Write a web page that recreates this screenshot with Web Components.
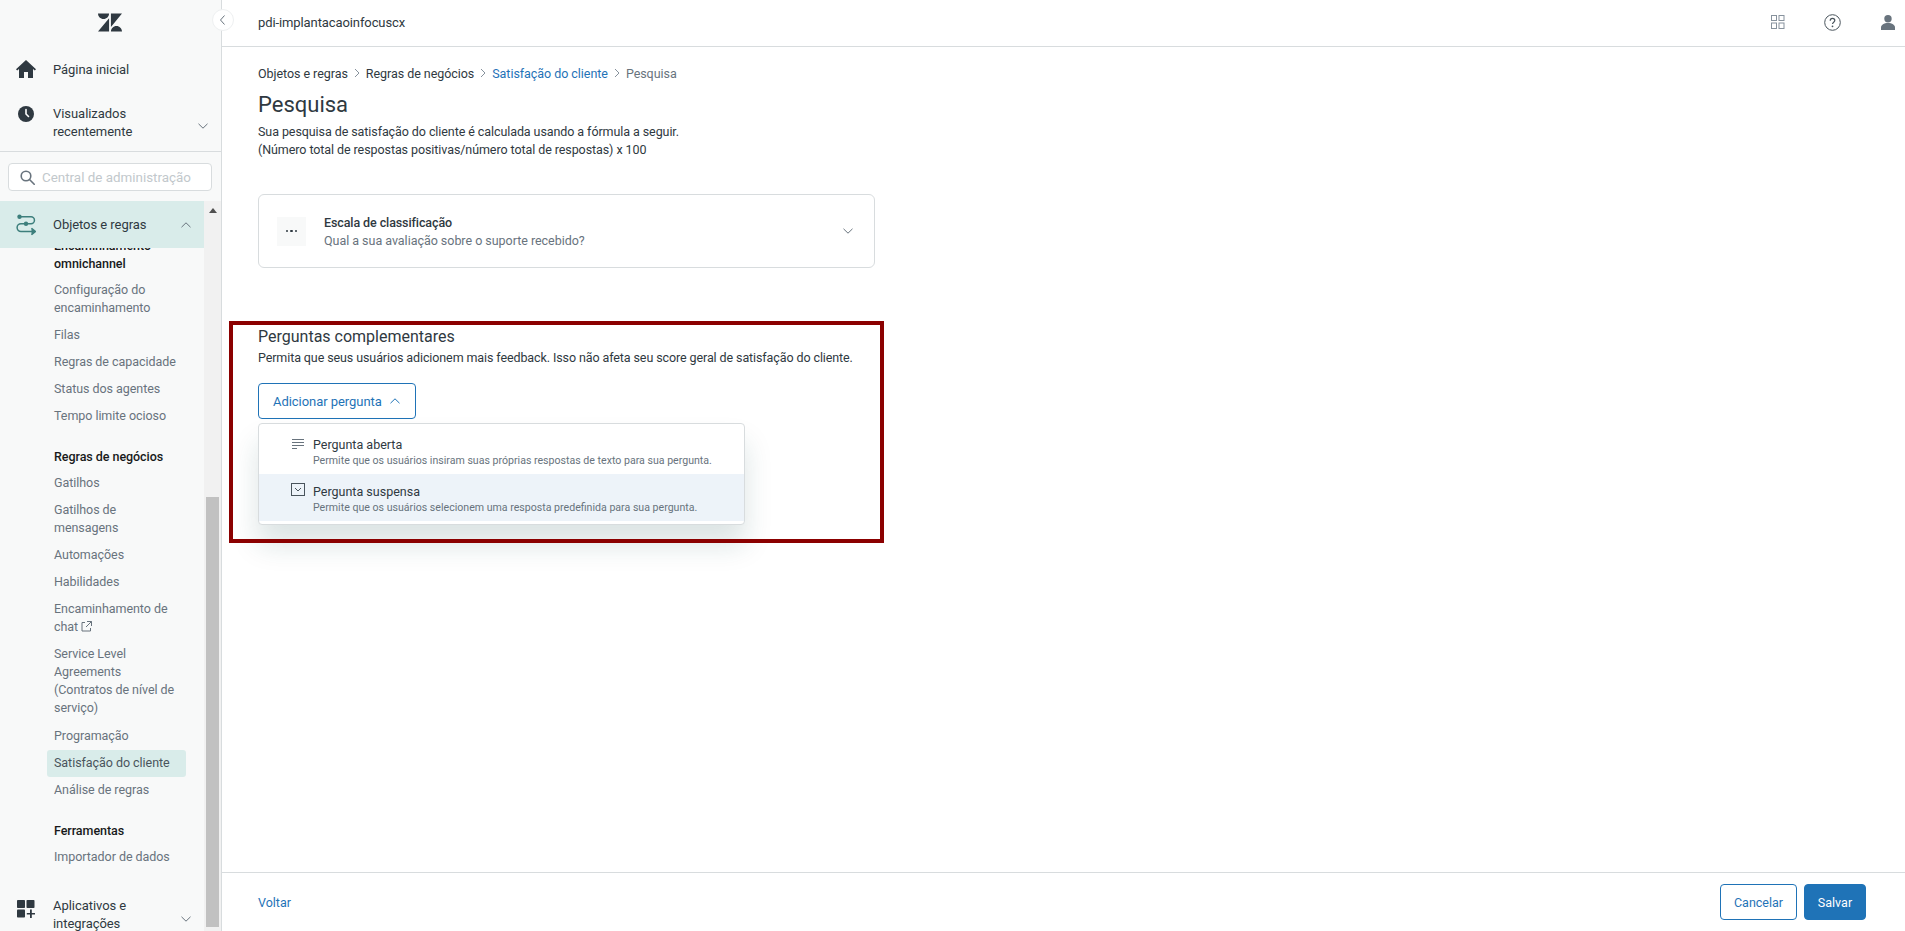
<!DOCTYPE html>
<html lang="pt-BR"><head><meta charset="utf-8"><title>Pesquisa</title>
<style>
html,body{margin:0;height:100%;overflow:hidden;background:#fff}
body{font-family:Roboto,"Open Sans",sans-serif;font-size:13px;color:#2f3941}
</style></head><body>
<zd-app>
  <zd-sidebar slot="side">
    <zd-nav slot="top" label="Página inicial" icon="home" style="height:47px;margin-top:45px"></zd-nav>
    <zd-nav slot="top" label="Visualizados<br>recentemente" icon="clock" chevron="down" style="height:60px"></zd-nav>
    <zd-link heading two>Encaminhamento<br>omnichannel</zd-link>
    <zd-link two>Configuração do<br>encaminhamento</zd-link>
    <zd-link>Filas</zd-link>
    <zd-link>Regras de capacidade</zd-link>
    <zd-link>Status dos agentes</zd-link>
    <zd-link>Tempo limite ocioso</zd-link>
    <zd-link heading>Regras de negócios</zd-link>
    <zd-link>Gatilhos</zd-link>
    <zd-link two>Gatilhos de<br>mensagens</zd-link>
    <zd-link>Automações</zd-link>
    <zd-link>Habilidades</zd-link>
    <zd-link two>Encaminhamento de<br>chat <svg width="11" height="11" viewBox="0 0 11 11" fill="none" stroke="#68737d" style="vertical-align:-1px"><path d="M4 1.500H1v8.500h8.500V7M6 .5h4.500V5M10.500.5 5 6"/></svg></zd-link>
    <zd-link two style="padding-bottom:5.500px">Service Level<br>Agreements<br>(Contratos de nível de<br>serviço)</zd-link>
    <zd-link>Programação</zd-link>
    <zd-link active>Satisfação do cliente</zd-link>
    <zd-link>Análise de regras</zd-link>
    <zd-link heading>Ferramentas</zd-link>
    <zd-link>Importador de dados</zd-link>
    <zd-nav label="Aplicativos e<br>integrações" icon="apps" chevron="down" style="height:36px;margin-top:26px"></zd-nav>
  </zd-sidebar>
  <zd-topbar slot="top">pdi-implantacaoinfocuscx</zd-topbar>
  <zd-page slot="main">
    <zd-breadcrumb></zd-breadcrumb>
    <zd-intro></zd-intro>
    <zd-card></zd-card>
    <zd-followups>
      <zd-dropdown></zd-dropdown>
    </zd-followups>
  </zd-page>
  <zd-footer slot="foot"></zd-footer>
</zd-app>
<script>
const IC={
 home:'<svg width="20" height="18" viewBox="0 0 20 18" fill="#2f3941"><path d="M10 0 0 9.200l1.200 1.200L3 8.900V18h5v-6h4v6h5V8.900l1.800 1.500 1.200-1.200z"/></svg>',
 clock:'<svg width="16" height="16" viewBox="0 0 16 16"><circle cx="8" cy="8" r="8" fill="#2f3941"/><path d="M8 3.500V8l2.500 2.500" fill="none" stroke="#fff" stroke-width="1.600" stroke-linecap="round"/></svg>',
 rules:'<svg width="20" height="22" viewBox="0 0 20 22" fill="none" stroke="#3d7f7c" stroke-width="1.500"><circle cx="3.500" cy="2.800" r="2.200" fill="#3d7f7c" stroke="none"/><path d="M3.500 2.800H15a3.400 3.400 0 0 1 0 6.900H5a3.900 3.900 0 0 0 0 7.800h14"/><circle cx="10" cy="9.700" r="2.200" fill="#3d7f7c" stroke="none"/><path d="M15.500 14.200 19.300 17.500 15.500 20.800" fill="#3d7f7c"/></svg>',
 apps:'<svg width="18" height="18" viewBox="0 0 18 18" fill="#2f3941"><rect width="8" height="8" rx=".8"/><rect x="9.500" width="8" height="8" rx=".8"/><rect y="9.500" width="8" height="8" rx=".8"/><path d="M13 9.500h1.800v3.400H18v1.700h-3.200V18H13v-3.400H9.800v-1.700H13z"/></svg>'
};
const chev=(d,c='#68737d',w=12)=>`<svg width="${w}" height="${w}" viewBox="0 0 12 12" fill="none" stroke="${c}" style="display:block"><path d="${d=='up'?'M1.500 8.200 6 3.800l4.500 4.400':'M1.500 3.800 6 8.200l4.500-4.400'}"/></svg>`;
function def(name,html){customElements.define(name,class extends HTMLElement{
  constructor(){super();this.attachShadow({mode:'open'}).innerHTML=typeof html==='function'?html(this):html}
})}
def('zd-app',`<style>:host{display:grid;grid-template-columns:222px 1fr;grid-template-rows:47px 1fr 59px;width:1905px;height:931px;position:relative}
.s{grid-row:1/4;min-height:0}.t{grid-column:2}.m{grid-column:2;min-height:0}.f{grid-column:2}
.c{position:absolute;left:212px;top:9px;width:22px;height:22px;border-radius:50%;background:#fff;border:1px solid #eef0f1;box-sizing:border-box;display:flex;align-items:center;justify-content:center}</style>
<div class="s"><slot name="side"></slot></div><div class="t"><slot name="top"></slot></div><div class="m"><slot name="main"></slot></div><div class="f"><slot name="foot"></slot></div>
<div class="c"><svg width="8" height="12" viewBox="0 0 8 12" fill="none" stroke="#68737d"><path d="M5.500 1.500 1.500 6l4 4.500"/></svg></div>`);
def('zd-sidebar',`<style>:host{display:flex;flex-direction:column;height:931px;background:#f8f9f9;border-right:1px solid #d8dcde;box-sizing:border-box;width:222px;overflow:hidden}
.logo{position:absolute;left:98px;top:13px;display:block}
.topnav{display:block;border-bottom:1px solid #d8dcde;height:152px;box-sizing:border-box;flex:none}
.search{flex:none;margin:11px 9px 10px 8px;height:28px;box-sizing:border-box;background:#fff;border:1px solid #d8dcde;border-radius:4px;display:flex;align-items:center;gap:7px;padding-left:11px;color:#c2c8cc;font-size:13.400px}
.wrap{flex:1;min-height:0;display:flex}
.col{width:204px;flex:none;display:flex;flex-direction:column;min-height:0}
.head{flex:none;height:47px;background:#d9ecea;display:flex;align-items:center;position:relative;z-index:1}
.head svg.i{margin-left:16px;width:20px;flex:none}.head span{margin-left:17px;font-size:13px;letter-spacing:-.05px;color:#2f3941;flex:1}
.head .ch{margin-right:12px}
.clip{flex:1;overflow:hidden;min-height:0}
.inner{margin-top:-11px}
.sb{flex:1;background:#f1f1f1;position:relative;display:flex;flex-direction:column;align-items:center}
.sb i{display:block;margin-top:7px;border:4px solid transparent;border-top:0;border-bottom:5px solid #505050;width:0}
.thumb{position:absolute;left:2px;right:2px;top:296px;height:430px;background:#c1c1c1}
</style>
<svg class="logo" width="24" height="19" viewBox="0 3 26 19.700" fill="#2f3941"><path d="M12 8.200v14.500H0zM12 3c0 3.300-2.700 6-6 6S0 6.300 0 3zm2 19.700c0-3.300 2.700-6 6-6s6 2.700 6 6zm0-5V3h12z"/></svg>
<div class="topnav"><slot name="top"></slot></div>
<div class="search"><svg width="15" height="15" viewBox="0 0 15 15" fill="none" stroke="#68737d" stroke-width="1.600"><circle cx="6" cy="6" r="4.800"/><path d="m9.500 9.500 4.700 4.700" stroke-linecap="round"/></svg><span>Central de administração</span></div>
<div class="wrap"><div class="col"><div class="head">${IC.rules.replace('<svg','<svg class="i"')}<span>Objetos e regras</span><div class="ch">${chev('up')}</div></div>
<div class="clip"><div class="inner"><slot></slot></div></div></div><div class="sb"><i></i><div class="thumb"></div></div></div>`);
def('zd-nav',h=>`<style>:host{display:flex;align-items:center;font-size:13px;letter-spacing:-.05px;line-height:18px;color:#2f3941}
.i{width:20px;margin-left:16px;display:flex;justify-content:center;align-self:flex-start;padding-top:var(--ip,14px);flex:none}
.l{margin-left:17px;flex:1}:host([slot=top]) .l{padding-top:2px}.ch{margin-right:12px;padding-top:8px}</style>
<div class="i" style="--ip:${h.getAttribute('icon')=='home'?'15px':h.getAttribute('icon')=='clock'?'14px':'3px'}">${IC[h.getAttribute('icon')]}</div><div class="l">${h.getAttribute('label')}</div>${h.getAttribute('chevron')?`<div class="ch">${chev(h.getAttribute('chevron'))}</div>`:''}`);
def('zd-link',h=>`<style>:host{display:block;font-size:12.500px;letter-spacing:-.05px;line-height:18px;color:#68737d;padding:4.500px 0 4.500px 7px;margin-left:47px;margin-right:18px}
:host([heading]){color:#17191b;font-weight:500;padding:0 0 0 7px;margin-top:18.500px;margin-bottom:3.500px}
:host([heading][two]){margin-top:0}
:host([active]){background:#d9ecea;border-radius:3px;color:#49545c}</style><slot></slot>`);
def('zd-topbar',`<style>:host{display:flex;align-items:center;height:47px;box-sizing:border-box;border-bottom:1px solid #d8dcde;padding:0 1px 2px 36px;font-size:13px;letter-spacing:-.1px;color:#2f3941;background:#fff}
.t{flex:1}.r{display:flex;align-items:center;gap:0}.b{width:55px;display:flex;justify-content:center}</style>
<div class="t"><slot></slot></div><div class="r">
<div class="b"><svg width="14" height="14" viewBox="0 0 14 14" fill="none" stroke="#87929d"><rect x=".5" y=".5" width="5" height="5"/><rect x="8" y=".5" width="5" height="5"/><rect x=".5" y="8" width="5" height="5.500"/><rect x="8" y="8" width="5" height="5.500"/></svg></div>
<div class="b"><svg width="17" height="17" viewBox="0 0 17 17" fill="none" stroke="#49545c"><circle cx="8.500" cy="8.500" r="7.800"/><path d="M6.200 6.700c0-1.400 1-2.300 2.300-2.300s2.300.9 2.300 2.100c0 1.600-2.300 1.800-2.300 3.600" stroke-width="1.200"/><circle cx="8.500" cy="12.300" r=".9" fill="#49545c" stroke="none"/></svg></div>
<div class="b" style="width:32px;margin-left:12px"><svg width="14" height="15" viewBox="0 0 14 15" fill="#68737d"><circle cx="7" cy="3.700" r="3.700"/><path d="M0 15v-2.500C0 10 3 8 7 8s7 2 7 4.500V15z"/></svg></div></div>`);
def('zd-page',`<style>:host{display:block;height:825px;padding:16px 0 0 36px;box-sizing:border-box;overflow:hidden;background:#fff}</style><slot></slot>`);
def('zd-breadcrumb',`<style>:host{display:flex;align-items:center;height:20px;font-size:12.500px;letter-spacing:-.05px;color:#2f3941;gap:6px}a{color:#1f73b7}span.l{color:#68737d}svg{display:block}</style>
<span>Objetos e regras</span>${[['Regras de negócios',''],['Satisfação do cliente','a'],['Pesquisa','l']].map(([t,k])=>`<svg width="6" height="10" viewBox="0 0 6 10" fill="none" stroke="#87929d"><path d="m1 1 4 4-4 4"/></svg>`+(k=='a'?`<a>${t}</a>`:k=='l'?`<span class="l">${t}</span>`:`<span>${t}</span>`)).join('')}`);
def('zd-intro',`<style>:host{display:block}h1{font-size:22px;font-weight:400;line-height:30px;margin:7px 0 3px;color:#2f3941}p{margin:0;font-size:12.500px;letter-spacing:-.08px;line-height:18px;color:#2f3941}</style>
<h1>Pesquisa</h1><p>Sua pesquisa de satisfação do cliente é calculada usando a fórmula a seguir.<br>(Número total de respostas positivas/número total de respostas) x 100</p>`);
def('zd-card',`<style>:host{display:flex;align-items:center;width:617px;height:74px;box-sizing:border-box;margin-top:35px;border:1px solid #d8dcde;border-radius:6px;padding-left:18px;background:#fff}
.ic{width:29px;height:29px;background:#f8f9f9;display:flex;align-items:center;justify-content:center;gap:2px;flex:none}.ic i{width:2.500px;height:2.500px;border-radius:50%;background:#2f3941}
.t{margin-left:18px;flex:1;line-height:18px;padding-top:1px}.a{font-size:12.500px;letter-spacing:-.1px;font-weight:500;color:#2f3941}.b{font-size:12.500px;letter-spacing:-.03px;color:#68737d}.ch{margin-right:20px}</style>
<div class="ic"><i></i><i></i><i></i></div><div class="t"><div class="a">Escala de classificação</div><div class="b">Qual a sua avaliação sobre o suporte recebido?</div></div><div class="ch">${chev('down')}</div>`);
def('zd-followups',`<style>:host{display:block;position:relative;margin-top:58px;height:200px}
h2{font-size:16px;font-weight:400;line-height:22px;margin:0;color:#2f3941}p{margin:0;font-size:12.500px;letter-spacing:-.1px;line-height:20px;color:#2f3941;white-space:nowrap}
button{display:flex;align-items:center;gap:7px;margin-top:15px;height:36px;width:158px;box-sizing:border-box;padding:0 0 0 14px;border:1px solid #1f73b7;border-radius:4px;background:#fff;color:#1f73b7;font:inherit;font-size:13px;letter-spacing:-.05px}
.red{position:absolute;left:-29px;top:-5px;width:655px;height:222px;box-sizing:border-box;border:4px solid #8b0000;pointer-events:none;z-index:3}</style>
<h2>Perguntas complementares</h2><p>Permita que seus usuários adicionem mais feedback. Isso não afeta seu score geral de satisfação do cliente.</p>
<button>Adicionar pergunta ${chev('up','#1f73b7')}</button><slot></slot><div class="red"></div>`);
def('zd-dropdown',`<style>:host{display:block;position:absolute;left:0;top:97px;width:487px;height:102px;box-sizing:border-box;border:1px solid #d8dcde;border-radius:4px;background:#fff;box-shadow:0 20px 28px rgba(23,73,77,.15);z-index:2;padding-top:1px}
.it{display:flex;height:49px;padding:0 0 0 32px;box-sizing:border-box}.it+.it{background:#edf3f9;height:47px}
.ic{width:22px;flex:none;padding-top:13px}.a{font-size:12.500px;line-height:16px;margin-top:12px;color:#2f3941}.it+.it .a{margin-top:9.500px}.b{font-size:10.600px;line-height:15px;color:#68737d}</style>
<div class="it"><div class="ic"><svg width="14" height="14" viewBox="0 0 14 14" stroke="#68737d" fill="none"><path d="M1 1.500h12M1 4.500h12M1 7.500h12M1 10.500h5"/></svg></div><div><div class="a">Pergunta aberta</div><div class="b">Permite que os usuários insiram suas próprias respostas de texto para sua pergunta.</div></div></div>
<div class="it"><div class="ic" style="padding-top:9px"><svg width="14" height="14" viewBox="0 0 14 14" stroke="#49545c" fill="none"><rect x=".5" y=".5" width="13" height="12"/><path d="m4 5 3 3 3-3"/></svg></div><div><div class="a">Pergunta suspensa</div><div class="b">Permite que os usuários selecionem uma resposta predefinida para sua pergunta.</div></div></div>`);
def('zd-footer',`<style>:host{display:flex;align-items:center;height:59px;box-sizing:border-box;border-top:1px solid #d8dcde;padding:0 39px 0 36px;background:#fff;font-size:12.500px;gap:7px}
a{color:#1f73b7;flex:1}button{height:36px;border-radius:4px;font:inherit;font-size:12.500px;border:1px solid #1f73b7;padding:0}
.c{width:77px;background:#fff;color:#1f73b7}.s{width:62px;background:#1f73b7;color:#fff}</style><a>Voltar</a><button class="c">Cancelar</button><button class="s">Salvar</button>`);
</script>
</body></html>
